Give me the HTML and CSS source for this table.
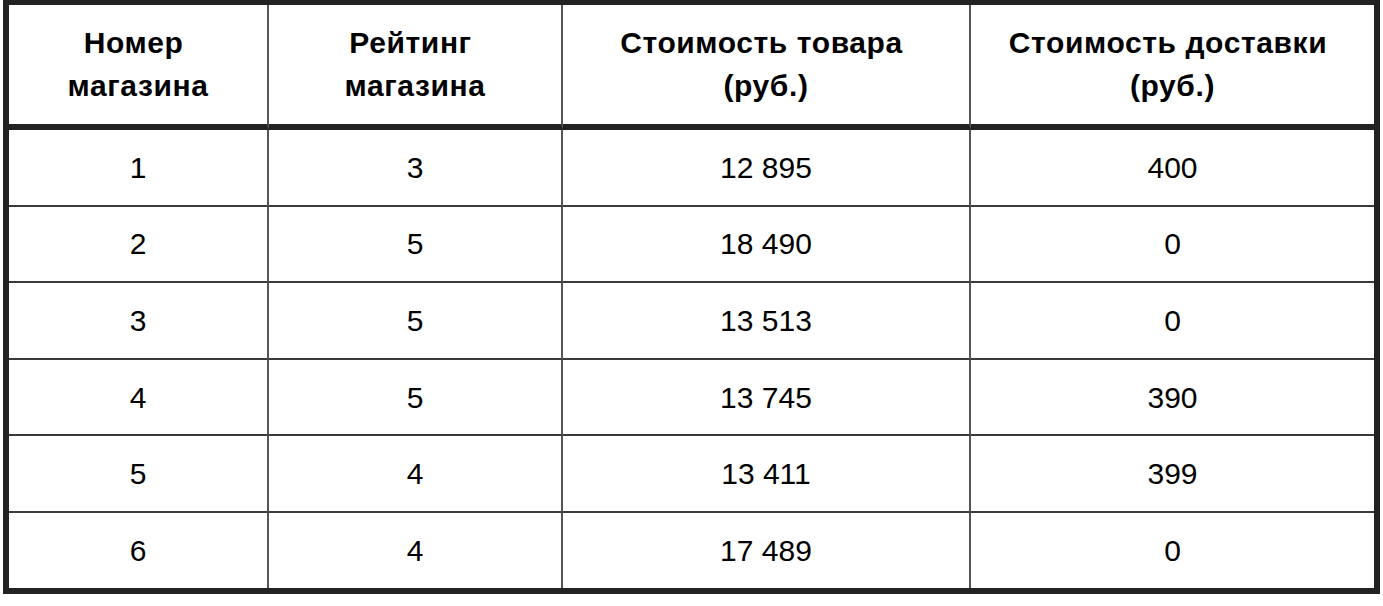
FILE: index.html
```html
<!DOCTYPE html>
<html lang="ru">
<head>
<meta charset="utf-8">
<title>Магазины</title>
<link rel="stylesheet" href="styles.css">
</head>
<body>
<div class="table">
  <div class="cell head">Номер&nbsp;<br>магазина</div>
  <div class="cell head">Рейтинг&nbsp;<br>магазина</div>
  <div class="cell head">Стоимость товара&nbsp;<br>(руб.)</div>
  <div class="cell head">Стоимость доставки&nbsp;<br>(руб.)</div>

  <div class="cell">1</div><div class="cell">3</div><div class="cell">12 895</div><div class="cell">400</div>
  <div class="cell">2</div><div class="cell">5</div><div class="cell">18 490</div><div class="cell">0</div>
  <div class="cell">3</div><div class="cell">5</div><div class="cell">13 513</div><div class="cell">0</div>
  <div class="cell">4</div><div class="cell">5</div><div class="cell">13 745</div><div class="cell">390</div>
  <div class="cell">5</div><div class="cell">4</div><div class="cell">13 411</div><div class="cell">399</div>
  <div class="cell last">6</div><div class="cell last">4</div><div class="cell last">17 489</div><div class="cell last">0</div>
</div>
</body>
</html>
```

FILE: styles.css
```css
html, body {
  margin: 0;
  padding: 0;
  background: #ffffff;
}

body {
  font-family: "Liberation Sans", Arial, sans-serif;
  color: #000000;
}

.table {
  display: grid;
  grid-template-columns: 260px 294px 408px 403px;
  width: max-content;
  margin-left: 3px;
  border: 6px solid #222222;
  border-top-width: 5px;
  background: #ffffff;
}

.cell {
  box-sizing: border-box;
  height: 76.6px;
  display: flex;
  align-items: center;
  justify-content: center;
  text-align: center;
  font-size: 30px;
  line-height: 43px;
  border-right: 2px solid #555555;
  border-bottom: 2px solid #3a3a3a;
}

.cell:nth-child(4n) {
  border-right: none;
}

.cell.head {
  height: 125px;
  font-weight: bold;
  letter-spacing: 0.6px;
  border-bottom: 6px solid #222222;
  padding-bottom: 1px;
}

.cell.last {
  height: 74.6px;
  border-bottom: none;
}
```
